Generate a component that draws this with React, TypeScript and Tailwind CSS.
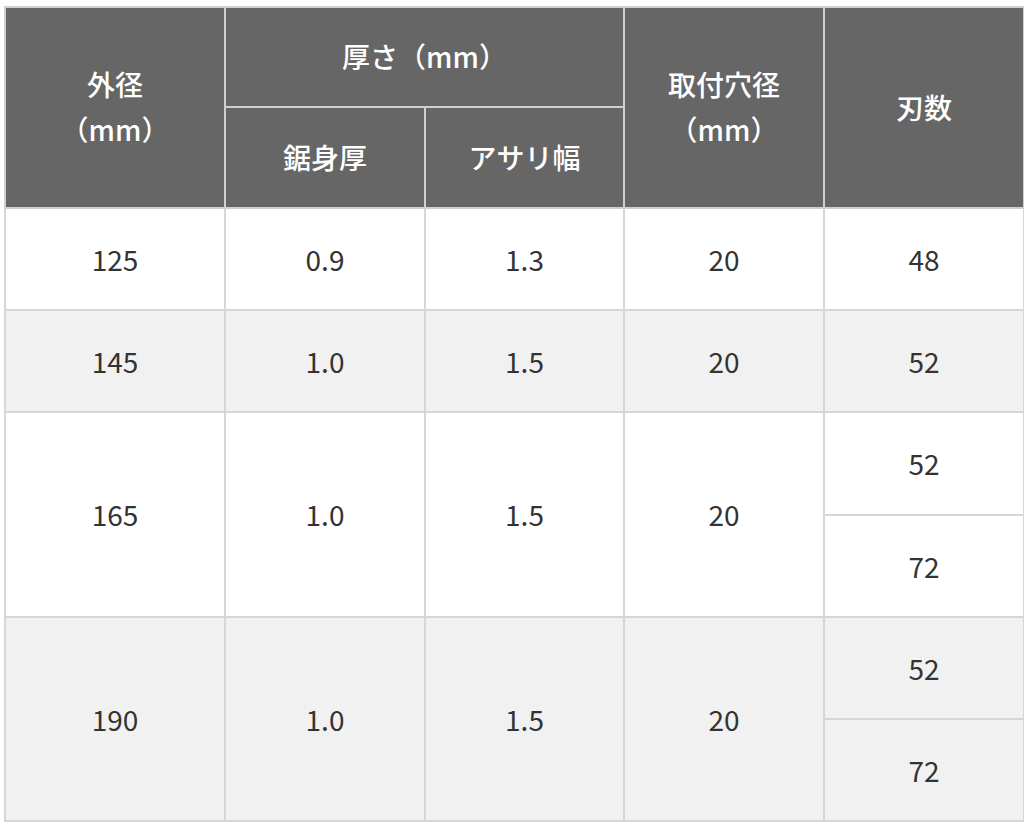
import React from 'react';

const th = 'border-2 border-[#cfcfcf] bg-[#666666] text-white font-medium text-center align-middle pb-[1px]';
const td = 'border-2 border-[#d6d6d6] text-center align-middle';

const App: React.FC = () => {
  return (
    <div className="bg-white w-[1024px] h-[826px] pt-[6px] pl-[4px] text-[28px] leading-[1.6] text-[#333333] [font-family:'Noto_Sans_CJK_JP','Noto_Sans',sans-serif]">
      <table className="border-collapse w-[1019px] table-fixed">
        <colgroup>
          <col className="w-[220px]" />
          <col className="w-[200px]" />
          <col className="w-[199px]" />
          <col className="w-[200px]" />
          <col className="w-[200px]" />
        </colgroup>
        <thead>
          <tr className="h-[100px]">
            <th rowSpan={2} className={th}>外径<br />（mm）</th>
            <th colSpan={2} className={th}>厚さ（mm）</th>
            <th rowSpan={2} className={th}>取付穴径<br />（mm）</th>
            <th rowSpan={2} className={th}>刃数</th>
          </tr>
          <tr className="h-[101px]">
            <th className={th}>鋸身厚</th>
            <th className={th}>アサリ幅</th>
          </tr>
        </thead>
        <tbody>
          <tr className="h-[102px] bg-white">
            <td className={td}>125</td>
            <td className={td}>0.9</td>
            <td className={td}>1.3</td>
            <td className={td}>20</td>
            <td className={td}>48</td>
          </tr>
          <tr className="h-[102px] bg-[#f1f1f1]">
            <td className={td}>145</td>
            <td className={td}>1.0</td>
            <td className={td}>1.5</td>
            <td className={td}>20</td>
            <td className={td}>52</td>
          </tr>
          <tr className="h-[103px] bg-white">
            <td rowSpan={2} className={td}>165</td>
            <td rowSpan={2} className={td}>1.0</td>
            <td rowSpan={2} className={td}>1.5</td>
            <td rowSpan={2} className={td}>20</td>
            <td className={td}>52</td>
          </tr>
          <tr className="h-[102px] bg-white">
            <td className={td}>72</td>
          </tr>
          <tr className="h-[102px] bg-[#f1f1f1]">
            <td rowSpan={2} className={td}>190</td>
            <td rowSpan={2} className={td}>1.0</td>
            <td rowSpan={2} className={td}>1.5</td>
            <td rowSpan={2} className={td}>20</td>
            <td className={td}>52</td>
          </tr>
          <tr className="h-[102px] bg-[#f1f1f1]">
            <td className={td}>72</td>
          </tr>
        </tbody>
      </table>
    </div>
  );
};

export default App;
